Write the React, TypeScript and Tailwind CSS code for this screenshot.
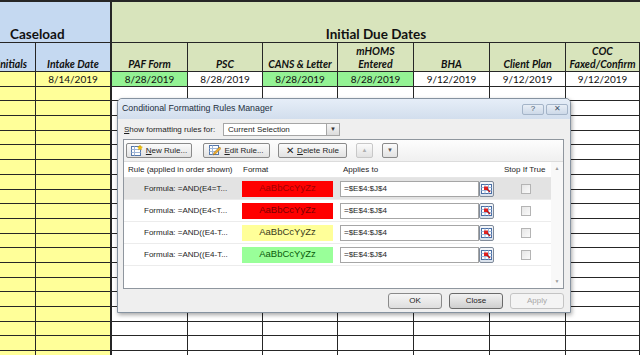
import React from 'react';

const gridCols = 'grid grid-cols-[36px_76px_76px_75px_75px_76px_76px_76px_1fr]';
const ln = 'border-[#262626]';

const headerCells: { text: React.ReactNode; blue?: boolean; thick?: boolean; clip?: boolean }[] = [
    { text: 'Initials', blue: true, clip: true },
    { text: 'Intake Date', blue: true, thick: true },
    { text: 'PAF Form' },
    { text: 'PSC' },
    { text: 'CANS & Letter' },
    { text: (<>mHOMS<br />Entered</>) },
    { text: 'BHA' },
    { text: 'Client Plan' },
    { text: (<>COC<br />Faxed/Confirm</>) },
];

const dataCells: { text: string; bg: string }[] = [
    { text: '', bg: 'bg-[#ffff99]' },
    { text: '8/14/2019', bg: 'bg-[#ffff99]' },
    { text: '8/28/2019', bg: 'bg-[#94f294]' },
    { text: '8/28/2019', bg: 'bg-white' },
    { text: '8/28/2019', bg: 'bg-[#94f294]' },
    { text: '8/28/2019', bg: 'bg-[#94f294]' },
    { text: '9/12/2019', bg: 'bg-white' },
    { text: '9/12/2019', bg: 'bg-white' },
    { text: '9/12/2019', bg: 'bg-white' },
];

const rules = [
    { formula: 'Formula: =AND(E4=T...', bg: 'bg-[#ff0000]', fg: 'text-[#a00000]', selected: true },
    { formula: 'Formula: =AND(E4<T...', bg: 'bg-[#ff0000]', fg: 'text-[#7a0000]' },
    { formula: 'Formula: =AND((E4-T...', bg: 'bg-[#ffff99]', fg: 'text-[#3a3a1a]' },
    { formula: 'Formula: =AND((E4-T...', bg: 'bg-[#99ff99]', fg: 'text-[#0a5a0a]' },
];

const RangeIcon = () => (
    <svg width="11" height="10" viewBox="0 0 11 10">
        <rect x="0.5" y="0.5" width="10" height="9" fill="#fff" stroke="#4a6fa5" />
        <path d="M0.5 3.5h10M0.5 6.5h10M4 0.5v9M7.5 0.5v9" stroke="#9fb6d8" />
        <rect x="3" y="2.5" width="4" height="3.5" fill="#e02020" />
        <path d="M6 5l3 3" stroke="#c01010" strokeWidth="1.4" />
    </svg>
);

const NewIcon = () => (
    <svg width="12" height="11" viewBox="0 0 12 11">
        <rect x="0.5" y="1.5" width="9" height="9" fill="#fff" stroke="#5577aa" />
        <path d="M0.5 4.5h9M0.5 7.5h9M3.5 1.5v9" stroke="#9fb6d8" />
        <path d="M9 0l0.8 1.6 1.7 0.3-1.2 1.2 0.3 1.7L9 4l-1.6 0.8 0.3-1.7-1.2-1.2 1.7-0.3z" fill="#f5c400" stroke="#c99a00" strokeWidth="0.4" />
    </svg>
);

const EditIcon = () => (
    <svg width="12" height="11" viewBox="0 0 12 11">
        <rect x="0.5" y="0.5" width="9" height="9" fill="#fff" stroke="#5577aa" />
        <path d="M0.5 3.5h9M0.5 6.5h9M3.5 0.5v9" stroke="#9fb6d8" />
        <path d="M4 10l1-2.5 5.5-5.5 1.5 1.5-5.5 5.5z" fill="#f0b030" stroke="#8a5a10" strokeWidth="0.5" />
    </svg>
);

const ToolButton: React.FC<{ w: string; children: React.ReactNode; disabled?: boolean }> = ({ w, children, disabled }) => (
    <div className={`${w} h-[15px] flex items-center justify-center gap-[3px] rounded-[2px] border ${disabled ? 'border-[#c8c8c8] text-[#b0b0b0]' : 'border-[#8a8a8a] text-[#1e1e1e]'} bg-linear-to-b from-[#fbfbfb] to-[#e2e2e2]`}>
        {children}
    </div>
);

const DlgButton: React.FC<{ children: React.ReactNode; disabled?: boolean; focus?: boolean }> = ({ children, disabled, focus }) => (
    <div className={`w-[54px] h-[16px] flex items-center justify-center rounded-[3px] border ${disabled ? 'border-[#c4c4c4] text-[#a8a8a8] bg-[#f4f4f4]' : focus ? 'border-[#6a6a6a] text-[#1e1e1e] bg-linear-to-b from-[#f2f2f2] to-[#cfcfcf]' : 'border-[#8a8a8a] text-[#1e1e1e] bg-linear-to-b from-[#f6f6f6] to-[#dedede]'}`}>
        {children}
    </div>
);

export default function App() {
    return (
        <div className="relative w-[640px] h-[355px] overflow-hidden bg-white font-['Lato',sans-serif] text-[#111]">
            {/* sheet */}
            <div className="flex flex-col">
                <div className={`grid grid-cols-[112px_1fr] h-[43px] border-t-2 border-b ${ln}`}>
                    <div className={`bg-[#c5d9f1] border-r-2 ${ln} flex items-end pl-[10px] pb-[1px] text-[13.5px] leading-none font-bold`}>Caseload</div>
                    <div className="bg-[#d8e4bc] flex items-end justify-center pb-[1px] text-[13.5px] leading-none font-bold">Initial Due Dates</div>
                </div>
                <div className={`${gridCols} h-[29px]`}>
                    {headerCells.map((c, i) => (
                        <div
                            key={i}
                            className={`${c.blue ? 'bg-[#c5d9f1]' : 'bg-[#d8e4bc]'} ${c.thick ? 'border-r-2' : 'border-r'} border-b ${ln} flex items-end ${c.clip ? 'justify-end pr-[8px] overflow-hidden' : 'justify-center'} pb-0 text-[10.5px] leading-[13px] font-bold italic text-center whitespace-nowrap`}
                        >
                            {c.text}
                        </div>
                    ))}
                </div>
                <div className={`${gridCols} h-[14.7px]`}>
                    {dataCells.map((c, i) => (
                        <div key={i} className={`${c.bg} ${i === 1 ? 'border-r-2' : 'border-r'} border-b ${ln} flex items-center justify-center text-[10px] leading-none`}>
                            {c.text}
                        </div>
                    ))}
                </div>
                {Array.from({ length: 19 }).map((_, r) => (
                    <div key={r} className={`${gridCols} h-[14.7px]`}>
                        {Array.from({ length: 9 }).map((__, i) => (
                            <div key={i} className={`${i < 2 ? 'bg-[#ffff99]' : 'bg-white'} ${i === 1 ? 'border-r-2' : 'border-r'} border-b ${ln}`} />
                        ))}
                    </div>
                ))}
            </div>

            {/* dialog */}
            <div className="absolute left-[117px] top-[98px] w-[454px] h-[215px] flex flex-col border border-[#8592a0] rounded-t-[5px] bg-[#efefef] shadow-[1px_2px_4px_rgba(0,0,0,0.35)] font-['Liberation_Sans',sans-serif] text-[8px] text-[#1e1e1e]">
                <div className="h-[20px] shrink-0 flex items-center pl-[4px] pr-[2px] rounded-t-[5px] bg-linear-to-b from-[#e6eef8] to-[#d2deed]">
                    <span className="text-[8.8px] text-[#24303f]">Conditional Formatting Rules Manager</span>
                    <div className="ml-auto flex gap-[2px]">
                        <div className="w-[22px] h-[11px] flex items-center justify-center rounded-[2px] border border-[#a4b4c8] bg-linear-to-b from-[#e8eef6] to-[#cdd9e8] text-[8px] text-[#44556a]">?</div>
                        <div className="w-[22px] h-[11px] flex items-center justify-center rounded-[2px] border border-[#a4b4c8] bg-linear-to-b from-[#e8eef6] to-[#cdd9e8] text-[8px] text-[#44556a]">✕</div>
                    </div>
                </div>
                <div className="flex-1 flex flex-col pl-[5px] pr-[6px] pt-[4px]">
                    <div className="h-[13px] flex items-center">
                        <span className="w-[100px] pl-[1px]"><u>S</u>how formatting rules for:</span>
                        <div className="w-[117px] h-[13px] flex items-center bg-white border border-[#a6a6a6] pl-[4px]">
                            <span>Current Selection</span>
                            <div className="ml-auto w-[13px] h-full flex items-center justify-center border-l border-[#a6a6a6] bg-linear-to-b from-[#f6f6f6] to-[#dcdcdc] text-[6px] text-[#333]">▼</div>
                        </div>
                    </div>
                    <div className="mt-[3px] h-[150px] flex flex-col border border-[#8f969e] bg-white">
                        {/* toolbar */}
                        <div className="h-[22px] shrink-0 flex items-center pl-[2px] bg-linear-to-b from-[#fdfdfd] to-[#f0f0f0] border-b border-[#dcdcdc]">
                            <ToolButton w="w-[66px]"><NewIcon /><span><u>N</u>ew Rule...</span></ToolButton>
                            <div className="w-[11px]" />
                            <ToolButton w="w-[67px]"><EditIcon /><span><u>E</u>dit Rule...</span></ToolButton>
                            <div className="w-[8px]" />
                            <ToolButton w="w-[69px]"><span className="text-[10px] leading-none">✕</span><span><u>D</u>elete Rule</span></ToolButton>
                            <div className="w-[9px]" />
                            <ToolButton w="w-[17px]" disabled><span className="text-[6px]">▲</span></ToolButton>
                            <div className="w-[9px]" />
                            <ToolButton w="w-[16px]"><span className="text-[6px] text-[#555]">▼</span></ToolButton>
                        </div>
                        <div className="flex flex-1">
                            <div className="flex flex-col flex-1">
                                <div className="h-[16px] flex items-center border-b border-[#e6e6e6]">
                                    <div className="w-[116px] pl-[4px]">Rule (applied in order shown)</div>
                                    <div className="w-[96px] pl-[3px]">Format</div>
                                    <div className="w-[164px] pl-[7px]">Applies to</div>
                                    <div className="flex-1 pl-[4px]">Stop If True</div>
                                </div>
                                {rules.map((r, i) => (
                                    <div key={i} className={`h-[22px] flex items-center border-b border-[#ececec] ${r.selected ? 'bg-[#e3e3e3]' : 'bg-white'}`}>
                                        <div className="w-[116px] pl-[20px] whitespace-nowrap">{r.formula}</div>
                                        <div className="w-[96px] pl-[2px]">
                                            <div className={`w-[91px] h-[16px] flex items-center justify-center ${r.bg} ${r.fg} text-[9.5px]`}>AaBbCcYyZz</div>
                                        </div>
                                        <div className="w-[164px] flex items-center pl-[4px]">
                                            <div className="w-[139px] h-[16px] flex items-center pl-[3px] bg-white border border-[#a6a6a6]">=$E$4:$J$4</div>
                                            <div className="w-[15px] h-[16px] flex items-center justify-center rounded-[2px] border border-[#7f8a99] bg-linear-to-b from-[#f4f7fb] to-[#d9e1ec]">
                                                <RangeIcon />
                                            </div>
                                        </div>
                                        <div className="flex-1 flex justify-center">
                                            <div className="w-[10px] h-[10px] border border-[#b4b4b4] bg-linear-to-br from-[#e6e6e6] to-[#fafafa]" />
                                        </div>
                                    </div>
                                ))}
                            </div>
                            <div className="w-[12px] flex flex-col items-center justify-between py-[3px] bg-[#f8f8f8] text-[5px] text-[#9a9a9a]">
                                <span>▲</span>
                                <span>▼</span>
                            </div>
                        </div>
                    </div>
                    <div className="mt-[4px] flex justify-end gap-[7px]">
                        <DlgButton>OK</DlgButton>
                        <DlgButton focus>Close</DlgButton>
                        <DlgButton disabled>Apply</DlgButton>
                    </div>
                </div>
            </div>
        </div>
    );
}
